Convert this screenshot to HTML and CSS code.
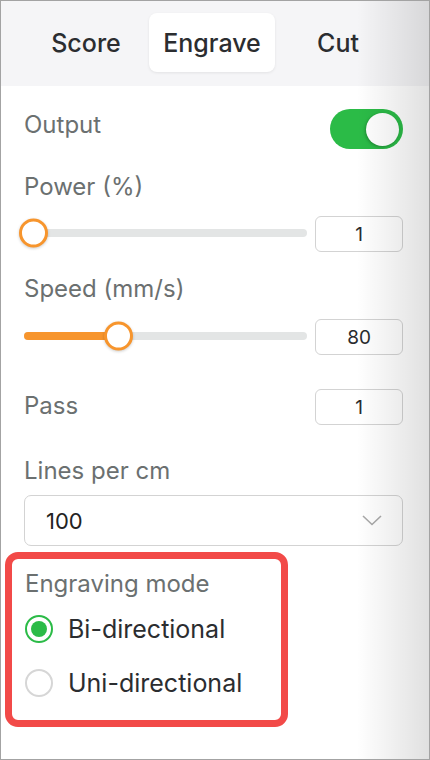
FILE: index.html
```html
<!DOCTYPE html>
<html lang="en">
<head>
  <meta charset="UTF-8" />
  <meta name="viewport" content="width=device-width, initial-scale=1.0"/>
  <title>Engrave settings</title>
  <link rel="stylesheet" href="styles.css">
</head>
<body>

  <div class="panel">
    <!-- Mode tabs -->
    <nav class="tabs">
      <button class="tab">Score</button>
      <button class="tab active">Engrave</button>
      <button class="tab">Cut</button>
    </nav>

    <div class="settings">
      <div class="row output-row">
        <span class="label">Output</span>
        <span class="toggle on"><span class="knob"></span></span>
      </div>

      <div class="label power-label">Power (%)</div>
      <div class="slider-row">
        <div class="slider">
          <div class="fill" style="width: 0%"></div>
          <div class="thumb" style="left: 0%"></div>
        </div>
        <input class="num" type="text" value="1">
      </div>

      <div class="label speed-label">Speed (mm/s)</div>
      <div class="slider-row">
        <div class="slider">
          <div class="fill" style="width: 33.5%"></div>
          <div class="thumb" style="left: 33.5%"></div>
        </div>
        <input class="num" type="text" value="80">
      </div>

      <div class="row pass-row">
        <span class="label">Pass</span>
        <input class="num" type="text" value="1">
      </div>

      <div class="label lines-label">Lines per cm</div>
      <div class="select">
        <span>100</span>
        <svg width="20" height="11" viewBox="0 0 20 11">
          <path d="M1 1 L10 9.5 L19 1" fill="none" stroke="#a9a9a9" stroke-width="1.6"/>
        </svg>
      </div>

      <!-- highlighted group -->
      <div class="mode-box">
        <div class="label">Engraving mode</div>
        <label class="option">
          <span class="radio checked"></span>
          <span>Bi-directional</span>
        </label>
        <label class="option second">
          <span class="radio"></span>
          <span>Uni-directional</span>
        </label>
      </div>
    </div>
  </div>

</body>
</html>
```

FILE: styles.css
```css
* {
  box-sizing: border-box;
}

html, body {
  margin: 0;
  padding: 0;
  background: #fff;
  font-family: Inter, "Noto Sans", sans-serif;
}

.panel {
  position: relative;
  width: 430px;
  height: 760px;
  border: 1px solid #a3a3a3;
  background: #fff;
  overflow: hidden;
}

/* soft shade on the right edge */
.panel::after {
  content: "";
  position: absolute;
  top: 0;
  right: 0;
  bottom: 0;
  width: 72px;
  background: linear-gradient(to right, rgba(0,0,0,0), rgba(0,0,0,0.12));
  pointer-events: none;
}

.tabs {
  display: grid;
  grid-template-columns: repeat(3, 126px);
  padding: 12px 0 14px 22px;
  background: #f5f5f7;
}

.tab {
  height: 59px;
  border: none;
  background: transparent;
  border-radius: 8px;
  font-family: inherit;
  font-size: 25px;
  font-weight: 500;
  color: #2b2d30;
  padding: 0;
}

.tab.active {
  background: #fff;
  box-shadow: 0 1px 3px rgba(0,0,0,0.08);
}

.settings {
  padding: 23px 26px 0 23px;
}

.label {
  font-size: 24px;
  line-height: 30px;
  color: #6b7070;
}

.row {
  display: flex;
  justify-content: space-between;
  align-items: flex-start;
}

.output-row .label {
  margin-top: 1px;
}

.toggle {
  width: 73px;
  height: 40px;
  border-radius: 20px;
  background: #2bbb47;
  position: relative;
}

.toggle .knob {
  position: absolute;
  top: 4px;
  right: 4px;
  width: 33px;
  height: 33px;
  border-radius: 50%;
  background: #fff;
  box-shadow: -1px 1px 3px rgba(0,0,0,0.25);
}

.power-label {
  margin-top: 23px;
}

.speed-label {
  margin-top: 22px;
}

.slider-row {
  display: flex;
  align-items: center;
  margin-top: 14px;
}

.speed-label + .slider-row {
  margin-top: 15px;
}

.slider {
  position: relative;
  flex: 1;
  height: 8px;
  margin: 0 8px 3px 0;
  border-radius: 4px;
  background: #e3e5e5;
}

.slider .fill {
  position: absolute;
  left: 0;
  top: 0;
  bottom: 0;
  border-radius: 4px;
  background: #f7952d;
}

.slider .thumb {
  position: absolute;
  top: 50%;
  width: 29px;
  height: 29px;
  margin-left: -5px;
  transform: translateY(-50%);
  border: 3px solid #f7952d;
  border-radius: 50%;
  background: #fff;
  box-shadow: 0 1px 3px rgba(0,0,0,0.2);
}

.speed-label + .slider-row .thumb {
  margin-left: -15px;
}

.num {
  width: 88px;
  height: 36px;
  border: 1px solid #d3d3d3;
  border-radius: 6px;
  background: transparent;
  font-family: inherit;
  font-size: 19px;
  color: #2a2c2e;
  text-align: center;
  padding: 0;
}

.pass-row {
  margin-top: 34px;
}

.pass-row .label {
  margin-top: 2px;
}

.lines-label {
  margin-top: 31px;
}

.select {
  display: flex;
  justify-content: space-between;
  align-items: center;
  height: 51px;
  margin-top: 9px;
  padding: 0 20px 0 21px;
  border: 1px solid #d3d3d3;
  border-radius: 7px;
  font-size: 22px;
  color: #222;
}

.mode-box {
  width: 283px;
  margin: 6px 0 0 -19px;
  padding: 10px 0 22px 13px;
  border: 7px solid #f24a48;
  border-radius: 13px;
}

.option {
  display: flex;
  align-items: center;
  gap: 15px;
  height: 30px;
  margin-top: 15px;
  font-size: 25px;
  color: #2b2d30;
}

.option.second {
  margin-top: 24px;
}

.radio {
  width: 28px;
  height: 28px;
  border: 2px solid #d6d6d6;
  border-radius: 50%;
  display: flex;
  align-items: center;
  justify-content: center;
}

.radio.checked {
  border-color: #2bbb47;
}

.radio.checked::before {
  content: "";
  width: 16px;
  height: 16px;
  border-radius: 50%;
  background: #2bbb47;
}
```
